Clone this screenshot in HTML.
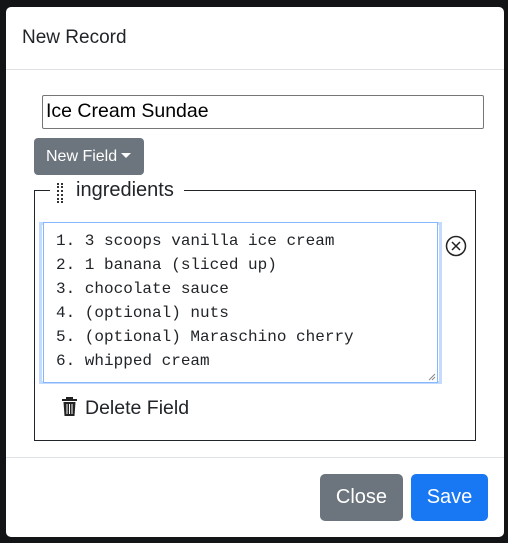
<!DOCTYPE html>
<html><head><style>
body{margin:0;width:508px;height:543px;background:#131416;position:relative;overflow:hidden;font-family:"Liberation Sans",sans-serif;color:#212529}
.m{position:absolute;left:6px;top:7px;width:498px;height:530px;background:#fff;border-radius:5px}
.a{position:absolute}
</style></head><body>
<div class="m">
<div class="a" style="left:16px;top:20px;font-size:19px">New Record</div>
<div class="a" style="left:0;top:62px;width:498px;height:1px;background:#dee2e6"></div>
<div class="a" style="left:36px;top:88px;width:442px;height:34px;border:1px solid #767676;border-radius:2px;box-sizing:border-box"></div>
<div class="a" style="left:40px;top:93px;font-size:19.5px;color:#000">Ice Cream Sundae</div>
<div class="a" style="left:28px;top:131px;width:110px;height:37px;background:#6c757d;border-radius:4px;color:#fff;font-size:16px;line-height:37px;text-indent:12px">New Field<span style="display:inline-block;margin-left:4px;vertical-align:3px;border-left:5px solid transparent;border-right:5px solid transparent;border-top:5px solid #fff"></span></div>
<div class="a" style="left:28px;top:183px;width:442px;height:251px;border:1px solid #212529;box-sizing:border-box"></div>
<div class="a" style="left:44px;top:170px;width:134px;height:26px;background:#fff"></div>
<div class="a" style="left:51px;top:176px;width:2px;height:20px;border-left:2px dotted #333;border-right:2px dotted #333"></div>
<div class="a" style="left:70px;top:172px;font-size:20px">ingredients</div>
<div class="a" style="left:33px;top:215px;width:403px;height:162px;border:3px solid #c2dbfe;box-sizing:border-box"></div>
<div class="a" style="left:37px;top:215px;width:395px;height:161px;border:1px solid #86b7fe;box-sizing:border-box;background:#fff"></div>
<div class="a" style="left:50px;top:222px;font-family:'Liberation Mono',monospace;font-size:16px;line-height:24px;color:#212529;white-space:pre">1. 3 scoops vanilla ice cream
2. 1 banana (sliced up)
3. chocolate sauce
4. (optional) nuts
5. (optional) Maraschino cherry
6. whipped cream</div>
<svg class="a" style="left:420px;top:364px" width="10" height="10"><path d="M9 3L3 9M9 6L6 9" stroke="#888" stroke-width="1"/></svg>
<svg class="a" style="left:439px;top:228px" width="22" height="22" viewBox="0 0 22 22"><circle cx="11" cy="11" r="9.5" fill="none" stroke="#222" stroke-width="1.5"/><path d="M7 7L15 15M15 7L7 15" stroke="#222" stroke-width="1.5"/></svg>
<svg class="a" style="left:55px;top:390px" width="17" height="20" viewBox="0 0 17 20"><path d="M1 3H16M6 3V1H11V3" stroke="#222" stroke-width="2" fill="none"/><path d="M2.5 5H14.5L13.5 19H3.5Z" fill="#222"/><path d="M6 7V17M8.5 7V17M11 7V17" stroke="#fff" stroke-width="1"/></svg>
<div class="a" style="left:79px;top:390px;font-size:19.5px">Delete Field</div>
<div class="a" style="left:0;top:450px;width:498px;height:1px;background:#dee2e6"></div>
<div class="a" style="left:314px;top:467px;width:83px;height:47px;background:#6c757d;border-radius:5px;color:#fff;font-size:20px;line-height:47px;text-align:center">Close</div>
<div class="a" style="left:405px;top:467px;width:77px;height:47px;border-radius:5px;color:#fff;font-size:20px;line-height:47px;text-align:center;background:#1877f2">Save</div>
</div>
</body></html>
